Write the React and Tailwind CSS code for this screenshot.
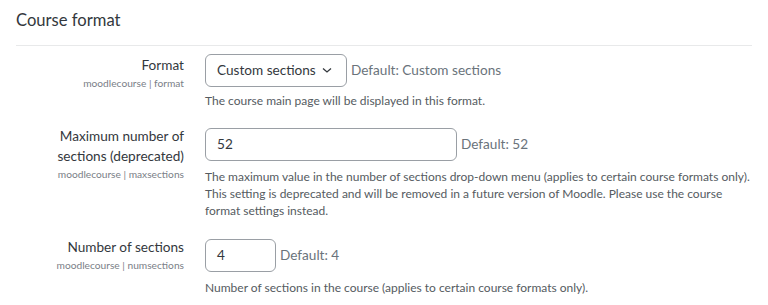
import React from "react";

function Label({ lines, short }) {
  return (
    <div className="w-[168px] shrink-0 text-right">
      {lines.map((l, i) => (
        <div key={i} className="text-[13.6px] leading-[20px] text-[#33383d]">{l}</div>
      ))}
      <div className="text-[10.2px] leading-[14px] text-[#7a8087] mt-[1px]">{short}</div>
    </div>
  );
}

export default function App() {
  return (
    <div className="w-[768px] h-[305px] bg-white overflow-hidden px-4" style={{ fontFamily: 'Lato, "Open Sans", sans-serif' }}>
      <div className="h-[46px] border-b border-[#e8e9ea] pt-[8px]">
        <h3 className="text-[16.6px] leading-[24px] text-[#33383d]">Course format</h3>
      </div>

      {/* Row 1 */}
      <div className="flex mt-[8px]">
        <div className="pt-[1px]"><Label lines={["Format"]} short="moodlecourse | format" /></div>
        <div className="ml-[21px]">
          <div className="flex items-center">
            <div className="h-[33px] w-[142px] border border-[#9a9fa5] rounded-[6px] flex items-center pl-[11px] pr-[12px] justify-between text-[13.6px] text-[#33383d]">
              <span className="whitespace-nowrap">Custom sections</span>
              <svg width="10" height="7" viewBox="0 0 10 7" className="mr-[2px]">
                <path d="M1 1.5 L5 5 L9 1.5" fill="none" stroke="#33383d" strokeWidth="1.3" />
              </svg>
            </div>
            <span className="ml-[4px] text-[13.6px] text-[#6a737b]">Default: Custom sections</span>
          </div>
          <div className="mt-[5px] text-[12px] leading-[17px] text-[#555b61]">The course main page will be displayed in this format.</div>
        </div>
      </div>

      {/* Row 2 */}
      <div className="flex mt-[19px]">
        <div className="-mt-[2px]"><Label lines={["Maximum number of", "sections (deprecated)"]} short="moodlecourse | maxsections" /></div>
        <div className="ml-[21px]">
          <div className="flex items-center">
            <div className="h-[33px] w-[252px] border border-[#9a9fa5] rounded-[6px] flex items-center pl-[11px] text-[13.6px] text-[#33383d]">52</div>
            <span className="ml-[4px] text-[13.6px] text-[#6a737b]">Default: 52</span>
          </div>
          <div className="mt-[7px] w-[548px] text-[12px] leading-[17px] text-[#555b61]">
            The maximum value in the number of sections drop-down menu (applies to certain course formats only). This setting is deprecated and will be removed in a future version of Moodle. Please use the course format settings instead.
          </div>
        </div>
      </div>

      {/* Row 3 */}
      <div className="flex mt-[20px]">
        <div className="-mt-[2px]"><Label lines={["Number of sections"]} short="moodlecourse | numsections" /></div>
        <div className="ml-[21px]">
          <div className="flex items-center">
            <div className="h-[33px] w-[71px] border border-[#9a9fa5] rounded-[6px] flex items-center pl-[11px] text-[13.6px] text-[#33383d]">4</div>
            <span className="ml-[4px] text-[13.6px] text-[#6a737b]">Default: 4</span>
          </div>
          <div className="mt-[7px] text-[12px] leading-[17px] text-[#555b61]">Number of sections in the course (applies to certain course formats only).</div>
        </div>
      </div>
    </div>
  );
}
